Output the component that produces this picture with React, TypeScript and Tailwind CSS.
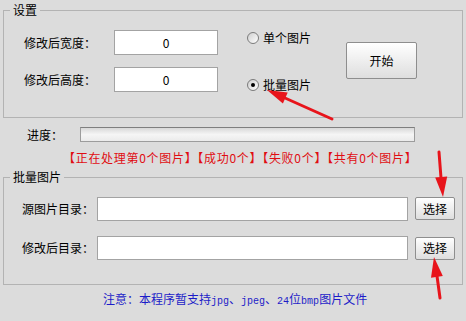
import type { ReactNode } from "react";

const cjk = "font-['Noto_Sans_CJK_SC','Noto_Sans',sans-serif]";

function Radio(prop: { checked?: boolean; label: string }) {
    return (
        <div className="flex h-[16px] items-center gap-[4px]">
            <span className="flex h-[12px] w-[12px] items-center justify-center rounded-full border border-[#7b7b7b] bg-linear-to-br from-[#cfcfcf] to-white">
                {prop.checked && <span className="h-[4px] w-[4px] rounded-full bg-black" />}
            </span>
            <span>{prop.label}</span>
        </div>
    );
}

function Btn(prop: { children: ReactNode; className: string }) {
    return (
        <button className={`flex items-center justify-center rounded-[2px] border border-[#8e8e8e] bg-linear-to-b from-white to-[#dedede] text-black ${prop.className}`}>
            {prop.children}
        </button>
    );
}

function Box(prop: { w: string; value?: string }) {
    return (
        <input
            readOnly
            value={prop.value ?? ""}
            className={`border border-[#a3a3a3] bg-white text-center text-[12px] text-black outline-none ${prop.w}`}
        />
    );
}

function Mono(prop: { children: ReactNode }) {
    return <span className="font-['Liberation_Mono',monospace] text-[10px]">{prop.children}</span>;
}

function Arrow(prop: { x1: number; y1: number; x2: number; y2: number; head: string }) {
    return (
        <g>
            <line x1={prop.x1} y1={prop.y1} x2={prop.x2} y2={prop.y2} stroke="#e8141b" strokeWidth="3" strokeLinecap="round" />
            <polygon points={prop.head} fill="#e8141b" />
        </g>
    );
}

export default function App() {
    return (
        <div className={`relative h-[321px] w-[466px] overflow-hidden bg-[#dcdcdc] text-[12px] leading-[16px] text-black ${cjk}`}>
            <fieldset className="mx-[3px] mt-[2px] border border-[#b3b3b3]">
                <legend className="ml-[6px] px-[3px] leading-[16px]">设置</legend>
                <div className="flex items-start pb-[24px] pl-[20px] pt-[12px]">
                    <div className="flex flex-col gap-[12px]">
                        <div className="flex h-[25px] items-center">
                            <span className="w-[90px]">修改后宽度：</span>
                            <Box w="h-[25px] w-[104px]" value="0" />
                        </div>
                        <div className="flex h-[25px] items-center">
                            <span className="w-[90px]">修改后高度：</span>
                            <Box w="h-[25px] w-[104px]" value="0" />
                        </div>
                    </div>
                    <div className="ml-[29px] flex w-[99px] flex-col gap-[31px] pt-[0px]">
                        <Radio label="单个图片" />
                        <Radio label="批量图片" checked />
                    </div>
                    <Btn className="mt-[12px] h-[37px] w-[71px] text-[12px]">开始</Btn>
                </div>
            </fieldset>

            <div className="mt-[9px] flex h-[15px] items-center pl-[27px]">
                <span className="w-[53px]">进度：</span>
                <div className="h-[15px] w-[335px] border border-[#9c9c9c] border-t-[#7f7f7f] bg-linear-to-b from-[#d9d9d9] via-[#f5f5f5] to-[#ebebeb]" />
            </div>

            <div className="mt-[8px] pl-[63px] tracking-[0.7px] text-[#e00d12]">
                【正在处理第0个图片】【成功0个】【失败0个】【共有0个图片】
            </div>

            <fieldset className="mx-[3px] mt-[3px] border border-[#b3b3b3]">
                <legend className="ml-[6px] px-[3px] leading-[16px]">批量图片</legend>
                <div className="flex flex-col gap-[15px] pb-[24px] pl-[18px] pt-[12px]">
                    <div className="flex h-[24px] items-center">
                        <span className="w-[75px]">源图片目录：</span>
                        <Box w="h-[24px] w-[311px]" />
                        <Btn className="ml-[7px] h-[23px] w-[40px] self-start">选择</Btn>
                    </div>
                    <div className="flex h-[24px] items-center">
                        <span className="w-[75px]">修改后目录：</span>
                        <Box w="h-[24px] w-[311px]" />
                        <Btn className="ml-[7px] h-[23px] w-[40px]">选择</Btn>
                    </div>
                </div>
            </fieldset>

            <div className="mt-[6px] pl-[103px] text-[#1c1cc8]">
                注意：本程序暂支持<Mono>jpg</Mono>、<Mono>jpeg</Mono>、<Mono>24</Mono>位<Mono>bmp</Mono>图片文件
            </div>

            <svg className="pointer-events-none absolute left-0 top-0" width="466" height="321">
                <Arrow x1={332} y1={119} x2={285} y2={98} head="267,90 287.7,92.6 282.9,103.6" />
                <Arrow x1={439} y1={152} x2={441} y2={178} head="443,197 447.2,176.6 435.2,177.6" />
                <Arrow x1={440} y1={298} x2={437} y2={276} head="434,257 442.8,275.9 431,277.7" />
            </svg>
        </div>
    );
}
